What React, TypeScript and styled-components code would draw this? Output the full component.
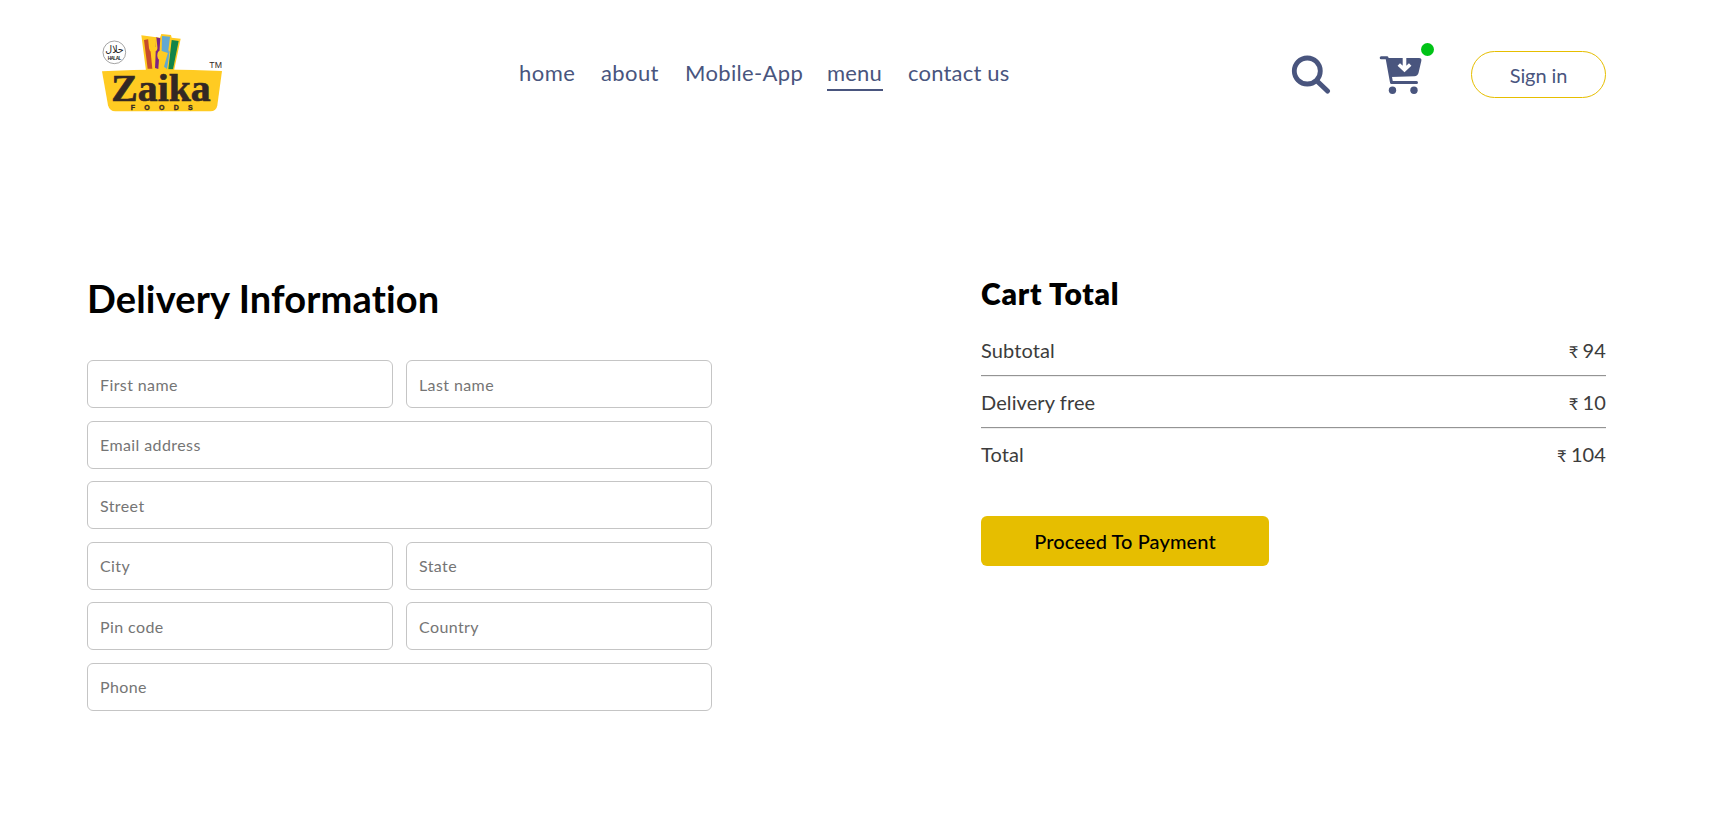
import React from "react";
import styled, { createGlobalStyle } from "styled-components";

const GlobalStyle = createGlobalStyle`
  * { box-sizing: border-box; margin: 0; padding: 0; }
  body { margin: 0; background: #fff; font-family: Lato, "Noto Sans", sans-serif; }
`;

const Page = styled.div`
  min-height: 838px;
  background: #fff;
`;

const Header = styled.header`
  display: flex;
  align-items: flex-start;
  width: 1606px;
  height: 148px;
  padding: 25px 0 0 90px;
`;

const Logo = styled.svg`
  display: block;
  width: 145px;
  height: 95px;
  flex: none;
`;

const Nav = styled.nav`
  display: flex;
  gap: 25px;
  margin: 32px 0 0 284px;
`;

const NavLink = styled.a<{ $width: number; $tracking: number; $active?: boolean }>`
  width: ${(p) => p.$width}px;
  height: 34px;
  color: #49557e;
  font-size: 22px;
  line-height: 32px;
  letter-spacing: ${(p) => p.$tracking}px;
  white-space: nowrap;
  border-bottom: 2px solid ${(p) => (p.$active ? "#49557e" : "transparent")};
`;

const Actions = styled.div`
  display: flex;
  margin-left: auto;
`;

const SearchIcon = styled.svg`
  width: 40px;
  height: 40px;
  margin: 30px 48px 0 0;
`;

const CartLink = styled.div`
  position: relative;
  width: 44px;
  height: 40px;
  margin: 30px 48px 0 0;
`;

const CartDot = styled.span`
  position: absolute;
  top: -12px;
  right: -11px;
  width: 13px;
  height: 13px;
  border-radius: 50%;
  background: #00c316;
`;

const SignIn = styled.button`
  width: 135px;
  height: 47px;
  margin-top: 26px;
  border: 1px solid #e6be00;
  border-radius: 50px;
  background: transparent;
  color: #49557e;
  font: 400 20px Lato, sans-serif;
  letter-spacing: -0.1px;
`;

const Order = styled.main`
  display: flex;
  justify-content: space-between;
  width: 1606px;
  padding: 127px 0 0 87px;
`;

const Delivery = styled.section`
  width: 625px;
`;

const Title = styled.h1`
  height: 85px;
  font-size: 38px;
  line-height: 46px;
  font-weight: 700;
  letter-spacing: 0.15px;
  white-space: nowrap;
`;

const Fields = styled.div`
  display: grid;
  grid-template-columns: 1fr 1fr;
  gap: 12.5px 13px;
`;

const Field = styled.input<{ $wide?: boolean }>`
  grid-column: ${(p) => (p.$wide ? "1 / -1" : "auto")};
  width: 100%;
  height: 48px;
  padding: 0 12px;
  border: 1px solid #c5c5c5;
  border-radius: 6px;
  outline: none;
  font: 400 16px Lato, sans-serif;
  letter-spacing: 0.4px;
  &::placeholder { color: #757575; }
`;

const Cart = styled.section`
  width: 625px;
`;

const CartTitle = styled.h2`
  height: 53px;
  font-size: 30px;
  line-height: 36px;
  font-weight: 800;
  letter-spacing: 0.75px;
  white-space: nowrap;
`;

const CartRow = styled.div`
  display: flex;
  justify-content: space-between;
  height: 52px;
  padding-top: 8px;
  color: #3c3c3c;
  font-size: 20px;
  font-weight: 400;
  line-height: 28px;
  letter-spacing: 0.1px;
`;

const Rupee = styled.span`
  margin-right: -1px;
  font-size: 16.5px;
`;

const CartLine = styled.div`
  height: 2px;
  margin: -5px 0 3px;
  border-top: 1px solid #949494;
  border-bottom: 1px solid #eee;
`;

const Pay = styled.button`
  width: 288px;
  height: 50px;
  margin-top: 32px;
  border: 0;
  border-radius: 6px;
  background: #e6be00;
  color: #000;
  font: 500 20px Lato, sans-serif;
  letter-spacing: 0.1px;
`;

const links = [
  { label: "home", width: 57, tracking: 0.5 },
  { label: "about", width: 59, tracking: 0.4 },
  { label: "Mobile-App", width: 117, tracking: 0.35 },
  { label: "menu", width: 56, tracking: 0.2, active: true },
  { label: "contact us", width: 103, tracking: 0.2 },
];

const fields = [
  { label: "First name" },
  { label: "Last name" },
  { label: "Email address", wide: true },
  { label: "Street", wide: true },
  { label: "City" },
  { label: "State" },
  { label: "Pin code" },
  { label: "Country" },
  { label: "Phone", wide: true },
];

const ZaikaLogo = () => (
  <Logo viewBox="0 0 435 285">
    <path d="M154 31L210 38L214 27L243 30L245 38L272 41L252 137H168Z" fill="#ffcb22" />
    <path d="M162 45L178 42L187 131H173Z" fill="#c54b2b" />
    <path d="M198 37L211 40L205 132L195 129Z" fill="#7b2485" />
    <path d="M216 33L240 35L234 84L215 78Z" fill="#62a8d1" />
    <path d="M245 45L266 48L249 133H235Z" fill="#138449" />
    <path d="M222 125L236 75L239 80L231 132Z" fill="#62a8d1" />
    <path d="M174 38L177 70Q178 79 185 80L189 132H195L196 79Q204 75 202 65L199 37L195 37L197 66H192L190 36L186 36L187 67H183L179 37Z" fill="#ffcb22" />
    <ellipse cx="211" cy="91" rx="9" ry="14" fill="#ffcb22" />
    <path d="M207 104H215L218 133H209Z" fill="#ffcb22" />
    <path d="M36 139Q215 128 396 138L382 241Q379 259 361 259H76Q59 259 54 241Z" fill="#ffcb22" />
    <text x="64" y="228" fontFamily="Liberation Serif" fontSize="114" fontWeight="700" textLength="298" lengthAdjust="spacingAndGlyphs" fill="#332824" stroke="#332824" strokeWidth="2">Zaika</text>
    <text x="122" y="254" fontFamily="Liberation Sans" fontSize="21" fontWeight="700" textLength="186" fill="#332824" stroke="#332824">FOODS</text>
    <text x="358" y="129" fontFamily="Liberation Sans" fontSize="25" textLength="38" lengthAdjust="spacingAndGlyphs" fill="#332824">TM</text>
    <circle cx="73" cy="82" r="34" fill="#fff" stroke="#777" strokeWidth="2" />
    <text x="46" y="85" fontFamily="DejaVu Sans" fontSize="31" textLength="55" lengthAdjust="spacingAndGlyphs" fill="#222">حلال</text>
    <text x="53" y="105" fontFamily="Liberation Sans" fontSize="14" fontWeight="700" textLength="41" fill="#222">HALAL</text>
  </Logo>
);

const Price = ({ value }: { value: number }) => (
  <span>
    <Rupee>₹</Rupee> {value}
  </span>
);

export default function App() {
  return (
    <>
      <GlobalStyle />
      <Page>
        <Header>
          <ZaikaLogo />
          <Nav>
            {links.map((l) => (
              <NavLink key={l.label} $width={l.width} $tracking={l.tracking} $active={l.active}>
                {l.label}
              </NavLink>
            ))}
          </Nav>
          <Actions>
            <SearchIcon viewBox="0 0 40 40" fill="none" stroke="#49557e">
              <circle cx="16.3" cy="16" r="13" strokeWidth="4.8" />
              <path d="M26 26L36.5 36" strokeWidth="5" strokeLinecap="round" />
            </SearchIcon>
            <CartLink>
              <svg width="44" height="40" viewBox="0 0 44 40">
                <path d="M8 3H40Q43 3 42.3 6L39.5 18Q38.7 21 35.5 21.2L12 22Z" fill="#49557e" />
                <path d="M2.2 2.8H8L12.5 27.5H37.5" fill="none" stroke="#49557e" strokeWidth="3" strokeLinecap="round" strokeLinejoin="round" />
                <circle cx="13.5" cy="35.2" r="3.7" fill="#49557e" />
                <circle cx="35" cy="35.2" r="3.7" fill="#49557e" />
                <path d="M25.5 2V14M19.8 9.5L25.5 14.8L31.2 9.5" fill="none" stroke="#fff" strokeWidth="3.6" />
              </svg>
              <CartDot />
            </CartLink>
            <SignIn>Sign in</SignIn>
          </Actions>
        </Header>
        <Order>
          <Delivery>
            <Title>Delivery Information</Title>
            <Fields>
              {fields.map((f) => (
                <Field key={f.label} placeholder={f.label} $wide={f.wide} />
              ))}
            </Fields>
          </Delivery>
          <Cart>
            <CartTitle>Cart Total</CartTitle>
            <CartRow><span>Subtotal</span><Price value={94} /></CartRow>
            <CartLine />
            <CartRow><span>Delivery free</span><Price value={10} /></CartRow>
            <CartLine />
            <CartRow><span>Total</span><Price value={104} /></CartRow>
            <Pay>Proceed To Payment</Pay>
          </Cart>
        </Order>
      </Page>
    </>
  );
}
